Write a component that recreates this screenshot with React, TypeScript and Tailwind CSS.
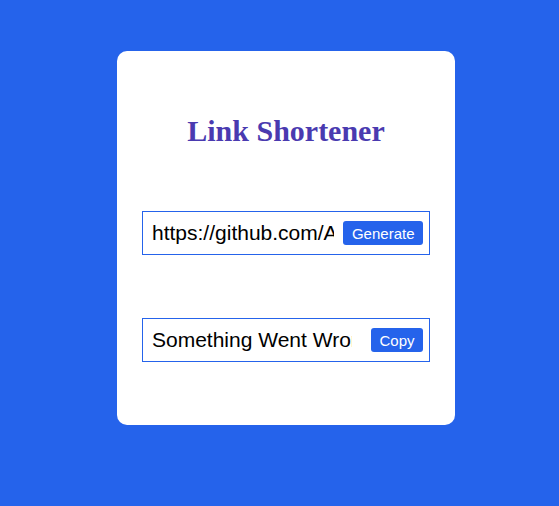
import React from 'react';

const Field = ({ value, label, inputWidth }: { value: string; label: string; inputWidth: string }) => {
  return <div className="flex items-center h-[44px] w-[288px] border border-[#2563eb] pl-[6px] pr-[6px]">
      <input
        readOnly
        value={value}
        className={`${inputWidth} min-w-0 pl-[3px] pr-0 outline-none bg-transparent text-[21px] text-black`}
        style={{ fontFamily: '"Liberation Sans", Arial, sans-serif' }}
      />
      <button className="ml-auto h-[24px] px-[8.5px] rounded-[3px] bg-[#2563eb] text-white text-[15px] leading-none shrink-0"
        style={{ fontFamily: '"Liberation Sans", Arial, sans-serif' }}>
        {label}
      </button>
    </div>;
};

const App = () => {
  return <div className="w-full min-h-[506px] bg-[#2563eb] pt-[51px] pl-[117px]">
      <div className="w-[338px] h-[374px] bg-white rounded-[10px] px-[25px] pt-[63px] flex flex-col items-center">
        <h1 className="text-[30px] leading-[34px] font-bold text-[#4a3ab0]"
          style={{ fontFamily: '"Liberation Serif", "Times New Roman", serif' }}>
          Link Shortener
        </h1>
        <div className="mt-[63px]">
          <Field value="https://github.com/Abhishek" label="Generate" inputWidth="w-[185px]" />
        </div>
        <div className="mt-[63px]">
          <Field value="Something Went Wrong" label="Copy" inputWidth="w-[203px]" />
        </div>
      </div>
    </div>;
};

export default App;
